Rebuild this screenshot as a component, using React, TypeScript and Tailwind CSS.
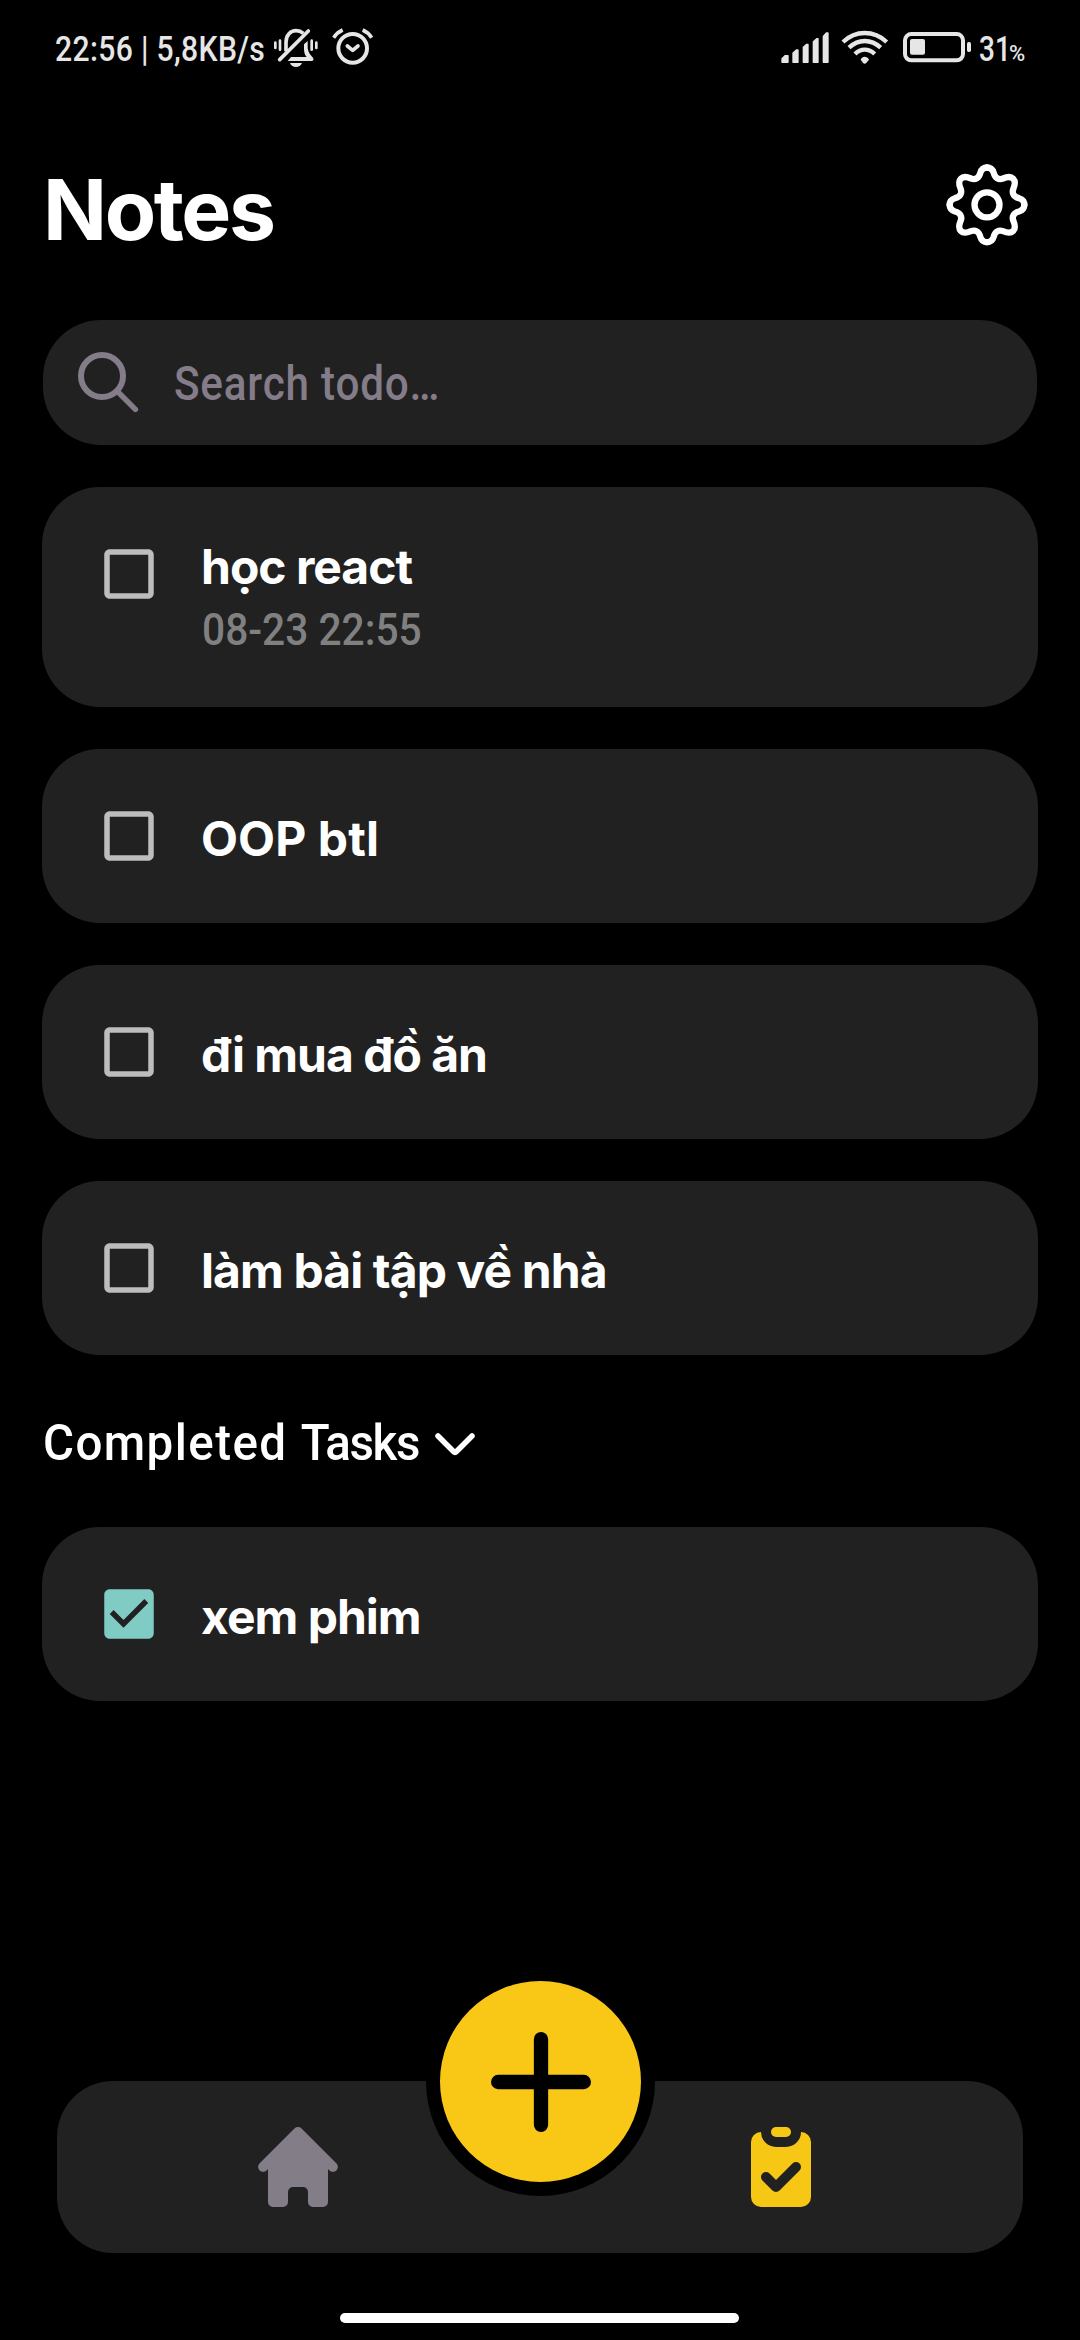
import React from "react";

const roboto = "font-['Roboto','Noto_Sans',sans-serif] font-medium";
const inter = "font-['Inter','Noto_Sans',sans-serif] font-bold";

type Task = { title: string; tracking: string; date?: string; done?: boolean };

const openTasks: Task[] = [
  { title: "học react", tracking: "tracking-[-1px]", date: "08-23 22:55" },
  { title: "OOP btl", tracking: "tracking-[0.1px]" },
  { title: "đi mua đồ ăn", tracking: "tracking-[-1px]" },
  { title: "làm bài tập về nhà", tracking: "tracking-[-0.9px]" },
];

const doneTasks: Task[] = [
  { title: "xem phim", tracking: "tracking-[-1px]", done: true },
];

function MutedAndAlarmIcons() {
  return (
    <svg className="h-[50px] w-[102px] shrink-0" viewBox="696 45 306 150" fill="none" stroke="#e6e6e6" strokeLinecap="round" strokeLinejoin="round">
      <path strokeWidth="8" d="M706 98V114M720 92V119M815 92V119M829 98V114" />
      <path strokeWidth="11" strokeLinecap="butt" d="M738 124V97C738 75 752 62 768 62C777 62 783 64 790 70" />
      <path strokeWidth="11" d="M719 149L805 63" />
      <path fill="#e6e6e6" stroke="none" d="M792 103L803 93V115C805 128 812 136 819 143C822 147 820 153 815 153H743L753 141H800C794 133 792 126 792 116Z" />
      <path fill="#e6e6e6" stroke="none" d="M750 159H786C783 167 776 171 768 171S753 167 750 159Z" />
      <circle cx="938" cy="115" r="43" strokeWidth="12" />
      <path strokeWidth="11" strokeLinecap="butt" d="M881 83C887 74 896 65 908 60M968 60C980 65 989 74 995 83" />
      <path strokeWidth="11" d="M922 108L938 121L954 108" />
    </svg>
  );
}

function SignalIcons() {
  return (
    <svg className="h-[50px] w-[193px] shrink-0" viewBox="60 45 579 150" fill="#e6e6e6" stroke="#e6e6e6">
      <path strokeWidth="4" strokeLinejoin="round" d="M66 146L75 137H84V157H66ZM99 129L109 120H114V157H99ZM130 112L140 103H144V157H130ZM160 95L170 86H174V157H160ZM190 79L199 69H204V157H190Z" />
      <g fill="none" strokeWidth="13">
        <path d="M249 96C268 78 290 69 314 69S361 78 380 96" />
        <path d="M267 113C281 100 297 93 314 93S348 100 362 113" />
        <path d="M285 132C293 124 303 119 314 119S336 124 344 132" />
      </g>
      <path stroke="none" d="M302 149C305 142 309 140 314 140S324 142 327 149L318 160C316 162 312 162 310 160Z" />
      <rect x="435" y="72" width="174" height="79" rx="19" fill="none" strokeWidth="12" />
      <rect x="450" y="87" width="45" height="47" rx="6" stroke="none" />
      <rect x="621" y="96" width="12" height="30" rx="5" stroke="none" />
    </svg>
  );
}

function GearIcon() {
  const quarter = "M0-112C10-112 17-106 20-96C24-80 35-74 48-79C62-85 71-86 78.500-78.500C86-71 85-62 79-48C74-35 80-24 96-20C106-17 112-10 112 0";
  return (
    <svg className="size-[84px]" viewBox="-126 -125.500 252 252" fill="none" stroke="white" strokeWidth="19" strokeLinecap="round">
      <path d={quarter} />
      <path d={quarter} transform="rotate(90)" />
      <path d={quarter} transform="rotate(180)" />
      <path d={quarter} transform="rotate(270)" />
      <circle r="37.500" />
    </svg>
  );
}

function SearchIcon() {
  return (
    <svg className="size-[64px]" viewBox="0 0 64 64" fill="none" stroke="#847d89" strokeLinecap="round">
      <circle cx="26" cy="26" r="21" strokeWidth="6" />
      <path d="M41 41L59.400 59.400" strokeWidth="5.500" />
    </svg>
  );
}

function Checkbox({ done }: { done?: boolean }) {
  return (
    <svg className="size-[66px] shrink-0" viewBox="0 0 24 24">
      {done ? (
        <path fill="#80cbc4" d="M19 3H5c-1.110 0-2 .9-2 2v14c0 1.100.89 2 2 2h14c1.110 0 2-.9 2-2V5c0-1.100-.89-2-2-2zm-9 14l-5-5 1.410-1.410L10 14.170l7.590-7.590L19 8l-9 9z" />
      ) : (
        <path fill="#bdbdbd" d="M19 5v14H5V5h14m0-2H5c-1.100 0-2 .9-2 2v14c0 1.100.9 2 2 2h14c1.100 0 2-.9 2-2V5c0-1.100-.9-2-2-2z" />
      )}
    </svg>
  );
}

function TaskCard({ task }: { task: Task }) {
  return (
    <div className={`flex items-start rounded-[58px] bg-[#212121] pl-[54px] ${task.date ? "h-[220px]" : "h-[174px]"}`}>
      <div className="mt-[54px]">
        <Checkbox done={task.done} />
      </div>
      <div className={`ml-[39px] ${task.date ? "mt-[51px]" : "mt-[61px]"}`}>
        <div className={`${inter} ${task.tracking} text-[48px] leading-[58px] whitespace-nowrap text-white`}>{task.title}</div>
        {task.date && (
          <div className={`${roboto} mt-[8px] ml-px origin-left scale-x-[0.925] text-[44px] leading-[52px] whitespace-nowrap text-[#808080]`}>{task.date}</div>
        )}
      </div>
    </div>
  );
}

function HomeIcon() {
  return (
    <svg className="size-[80px]" viewBox="0 0 240 240" fill="#837d88">
      <path d="M109.400 4.400L4.400 109.400A15 15 0 0 0 25.600 130.600L30 126.200V225a15 15 0 0 0 15 15H75a15 15 0 0 0 15-15V195a15 15 0 0 1 15-15h30a15 15 0 0 1 15 15v30a15 15 0 0 0 15 15h30a15 15 0 0 0 15-15V126.200l4.400 4.400A15 15 0 0 0 235.600 109.400L130.600 4.400A15 15 0 0 0 109.400 4.400z" />
    </svg>
  );
}

function ClipboardIcon() {
  return (
    <svg className="h-[80px] w-[60px]" viewBox="0 0 180 240" fill="#f7c716">
      <rect x="60" width="60" height="30" rx="15" />
      <path d="M30 15A30 30 0 0 0 0 45V210a30 30 0 0 0 30 30H150a30 30 0 0 0 30-30V45a30 30 0 0 0-30-30a45 45 0 0 1-45 45H75A45 45 0 0 1 30 15z" />
      <path d="M45 150L75 180L135 120" fill="none" stroke="#212121" strokeWidth="30" strokeLinecap="round" strokeLinejoin="round" />
    </svg>
  );
}

export default function App() {
  return (
    <div className="flex h-[2340px] w-[1080px] flex-col overflow-hidden bg-black">
      <div className={`${roboto} mt-[25px] flex h-[50px] items-start pl-[55px] text-[35px] leading-[50px] text-[#e6e6e6]`}>
        <div className="w-[217px]">
          <div className="origin-left scale-x-[0.86] tracking-[0.4px] whitespace-nowrap">22:56 | 5,8KB/s</div>
        </div>
        <MutedAndAlarmIcons />
        <div className="flex-1" />
        <SignalIcons />
        <div className="ml-[6px] flex w-[101px] items-baseline">
          <div className="w-[30px]">
            <div className="origin-left scale-x-[0.8]">31</div>
          </div>
          <div className="text-[22px]">%</div>
        </div>
      </div>

      <div className="mt-[84px] flex h-[100px] items-start justify-between pr-[51px] pl-[43px]">
        <h1 className={`${inter} text-[84px] leading-[101px] tracking-[-2.4px] text-white`}>Notes</h1>
        <div className="pt-[4px]">
          <GearIcon />
        </div>
      </div>

      <div className="mx-[43px] mt-[61px] flex h-[125px] items-start rounded-[58px] bg-[#212121] pl-[33px]">
        <div className="mt-[30px]">
          <SearchIcon />
        </div>
        <div className={`${roboto} mt-[35px] ml-[34px] origin-left scale-x-[0.88] text-[48px] leading-[58px] tracking-[0.9px] whitespace-nowrap text-[#847d89]`}>Search todo…</div>
      </div>

      <div className="mx-[42px] mt-[42px] flex flex-col gap-[42px]">
        {openTasks.map((t) => (
          <TaskCard key={t.title} task={t} />
        ))}
      </div>

      <div className="mt-[58px] flex h-[60px] items-start pl-[43px]">
        <div className={`${roboto} w-[388px] text-[50px] leading-[60px] text-white`}>
          <div className="origin-left scale-x-[0.95] tracking-[1.5px] whitespace-nowrap">
            Completed <span className="tracking-[-1.4px]">Tasks</span>
          </div>
        </div>
        <svg className="mt-[16px] h-[30px] w-[48px]" viewBox="0 0 48 30" fill="none" stroke="white" strokeWidth="5.500" strokeLinecap="round" strokeLinejoin="round">
          <path d="M7 7L22.500 22.500Q24 24 25.500 22.500L41 7" />
        </svg>
      </div>

      <div className="mx-[42px] mt-[54px]">
        {doneTasks.map((t) => (
          <TaskCard key={t.title} task={t} />
        ))}
      </div>

      <div className="relative mx-[57px] mt-[380px] flex h-[172px] shrink-0 rounded-[56px] bg-[#212121]">
        <div className="mt-[46px] ml-[201px]">
          <HomeIcon />
        </div>
        <div className="mt-[46px] ml-[413px]">
          <ClipboardIcon />
        </div>
        <div className="absolute top-[-114px] left-[369px] flex size-[229px] items-center justify-center rounded-full bg-black">
          <div className="flex size-[201px] items-center justify-center rounded-full bg-[#f9c816]">
            <svg className="size-[100px]" viewBox="0 0 100 100" stroke="black" strokeWidth="14.300" strokeLinecap="round">
              <path d="M50 7.150V92.850M7.150 50H92.850" />
            </svg>
          </div>
        </div>
      </div>

      <div className="mt-[60px] ml-[340px] h-[10px] w-[399px] shrink-0 rounded-full bg-white" />
    </div>
  );
}
